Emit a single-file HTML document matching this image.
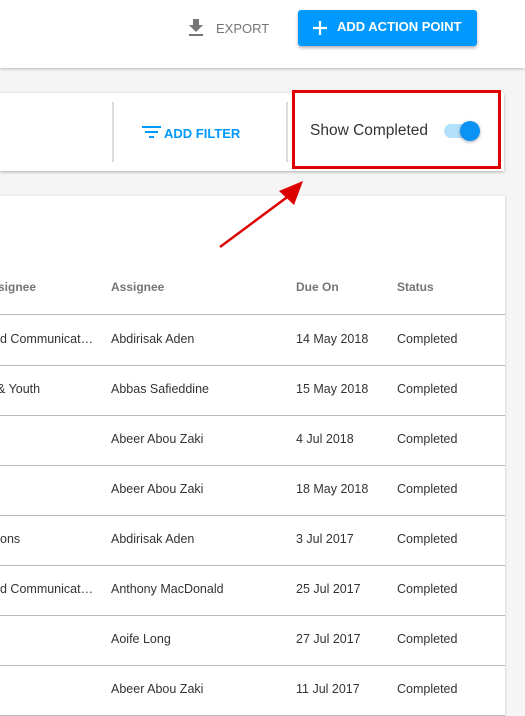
<!DOCTYPE html>
<html><head><style>
body{margin:0;width:525px;height:700px;overflow:hidden;background:#f5f5f5;font-family:"Liberation Sans",sans-serif;position:relative}
.hdr{position:absolute;left:0;top:0;width:525px;height:68px;background:#fff;box-shadow:0 1px 3px rgba(0,0,0,.25)}
.exp{position:absolute;left:187px;top:18px;color:#757575;font-size:13px;line-height:20px}
.btn{position:absolute;left:298px;top:10px;width:179px;height:36px;background:#0099ff;border-radius:3px;box-shadow:0 2px 3px rgba(0,0,0,.3);color:#fff;font-weight:bold;font-size:13px;line-height:34px}
.fc{position:absolute;left:0;top:93px;width:504px;height:78px;background:#fff;box-shadow:0 1px 3px rgba(0,0,0,.3)}
.sep{position:absolute;top:9px;width:2px;height:60px;background:#ddd}
.red{position:absolute;left:292px;top:90px;width:203px;height:73px;border:3px solid #e00000}
.tc{position:absolute;left:0;top:196px;width:505px;height:520px;background:#fff;box-shadow:0 1px 3px rgba(0,0,0,.2)}
.row{position:absolute;left:0;width:505px;height:50px;border-bottom:1px solid #b8b8b8;font-size:12.5px;color:#333;line-height:48px}
.row span{position:absolute;white-space:nowrap}
.h{color:#757575;font-weight:bold;font-size:12px}
</style></head><body>
<div class="hdr">
<div class="exp"><svg width="16" height="18" viewBox="0 0 16 18" style="position:absolute;left:1px;top:0"><path d="M5 1h6v6h4l-7 7-7-7h4z" fill="#757575"/><rect x="1" y="16" width="14" height="2" fill="#757575"/></svg><span style="position:absolute;left:29px;top:1px">EXPORT</span></div>
<div class="btn"><svg width="14" height="14" style="position:absolute;left:15px;top:11px"><path d="M7 0v14M0 7h14" stroke="#fff" stroke-width="2.2"/></svg><span style="position:absolute;left:39px">ADD ACTION POINT</span></div>
</div>
<div class="fc">
<div class="sep" style="left:112px"></div>
<div class="sep" style="left:286px"></div>
<svg width="19" height="13" style="position:absolute;left:142px;top:33px"><path d="M0 1h19M3 6h13M7 11h5" stroke="#0099ff" stroke-width="2"/></svg>
<div style="position:absolute;left:164px;top:33px;color:#0099ff;font-weight:bold;font-size:13px">ADD FILTER</div>
<div style="position:absolute;left:310px;top:29px;color:#333;font-size:15.5px">Show Completed</div>
<div style="position:absolute;left:444px;top:31px;width:34px;height:14px;border-radius:7px;background:#b3e0fb"></div>
<div style="position:absolute;left:460px;top:28px;width:20px;height:20px;border-radius:50%;background:#0a93f5;box-shadow:0 1px 3px rgba(0,0,0,.35)"></div>
</div>
<div class="red"></div>
<div class="tc">
<div class="row h" style="top:66px;height:52px;line-height:50px"><span style="left:-2px">signee</span><span style="left:111px">Assignee</span><span style="left:296px">Due On</span><span style="left:397px">Status</span></div>
<div class="row" style="top:119px"><span style="left:0">d Communicat…</span><span style="left:111px">Abdirisak Aden</span><span style="left:296px">14 May 2018</span><span style="left:397px">Completed</span></div>
<div class="row" style="top:169px"><span style="left:-3px">&amp; Youth</span><span style="left:111px">Abbas Safieddine</span><span style="left:296px">15 May 2018</span><span style="left:397px">Completed</span></div>
<div class="row" style="top:219px"><span style="left:111px">Abeer Abou Zaki</span><span style="left:296px">4 Jul 2018</span><span style="left:397px">Completed</span></div>
<div class="row" style="top:269px"><span style="left:111px">Abeer Abou Zaki</span><span style="left:296px">18 May 2018</span><span style="left:397px">Completed</span></div>
<div class="row" style="top:319px"><span style="left:0">ons</span><span style="left:111px">Abdirisak Aden</span><span style="left:296px">3 Jul 2017</span><span style="left:397px">Completed</span></div>
<div class="row" style="top:369px"><span style="left:0">d Communicat…</span><span style="left:111px">Anthony MacDonald</span><span style="left:296px">25 Jul 2017</span><span style="left:397px">Completed</span></div>
<div class="row" style="top:419px"><span style="left:111px">Aoife Long</span><span style="left:296px">27 Jul 2017</span><span style="left:397px">Completed</span></div>
<div class="row" style="top:469px"><span style="left:111px">Abeer Abou Zaki</span><span style="left:296px">11 Jul 2017</span><span style="left:397px">Completed</span></div>
</div>
<svg width="100" height="80" style="position:absolute;left:215px;top:175px"><path d="M5 72L75 20" stroke="#d00" stroke-width="2.5"/><path d="M88 6L64 16 79 30z" fill="#d00"/></svg>
</body></html>
